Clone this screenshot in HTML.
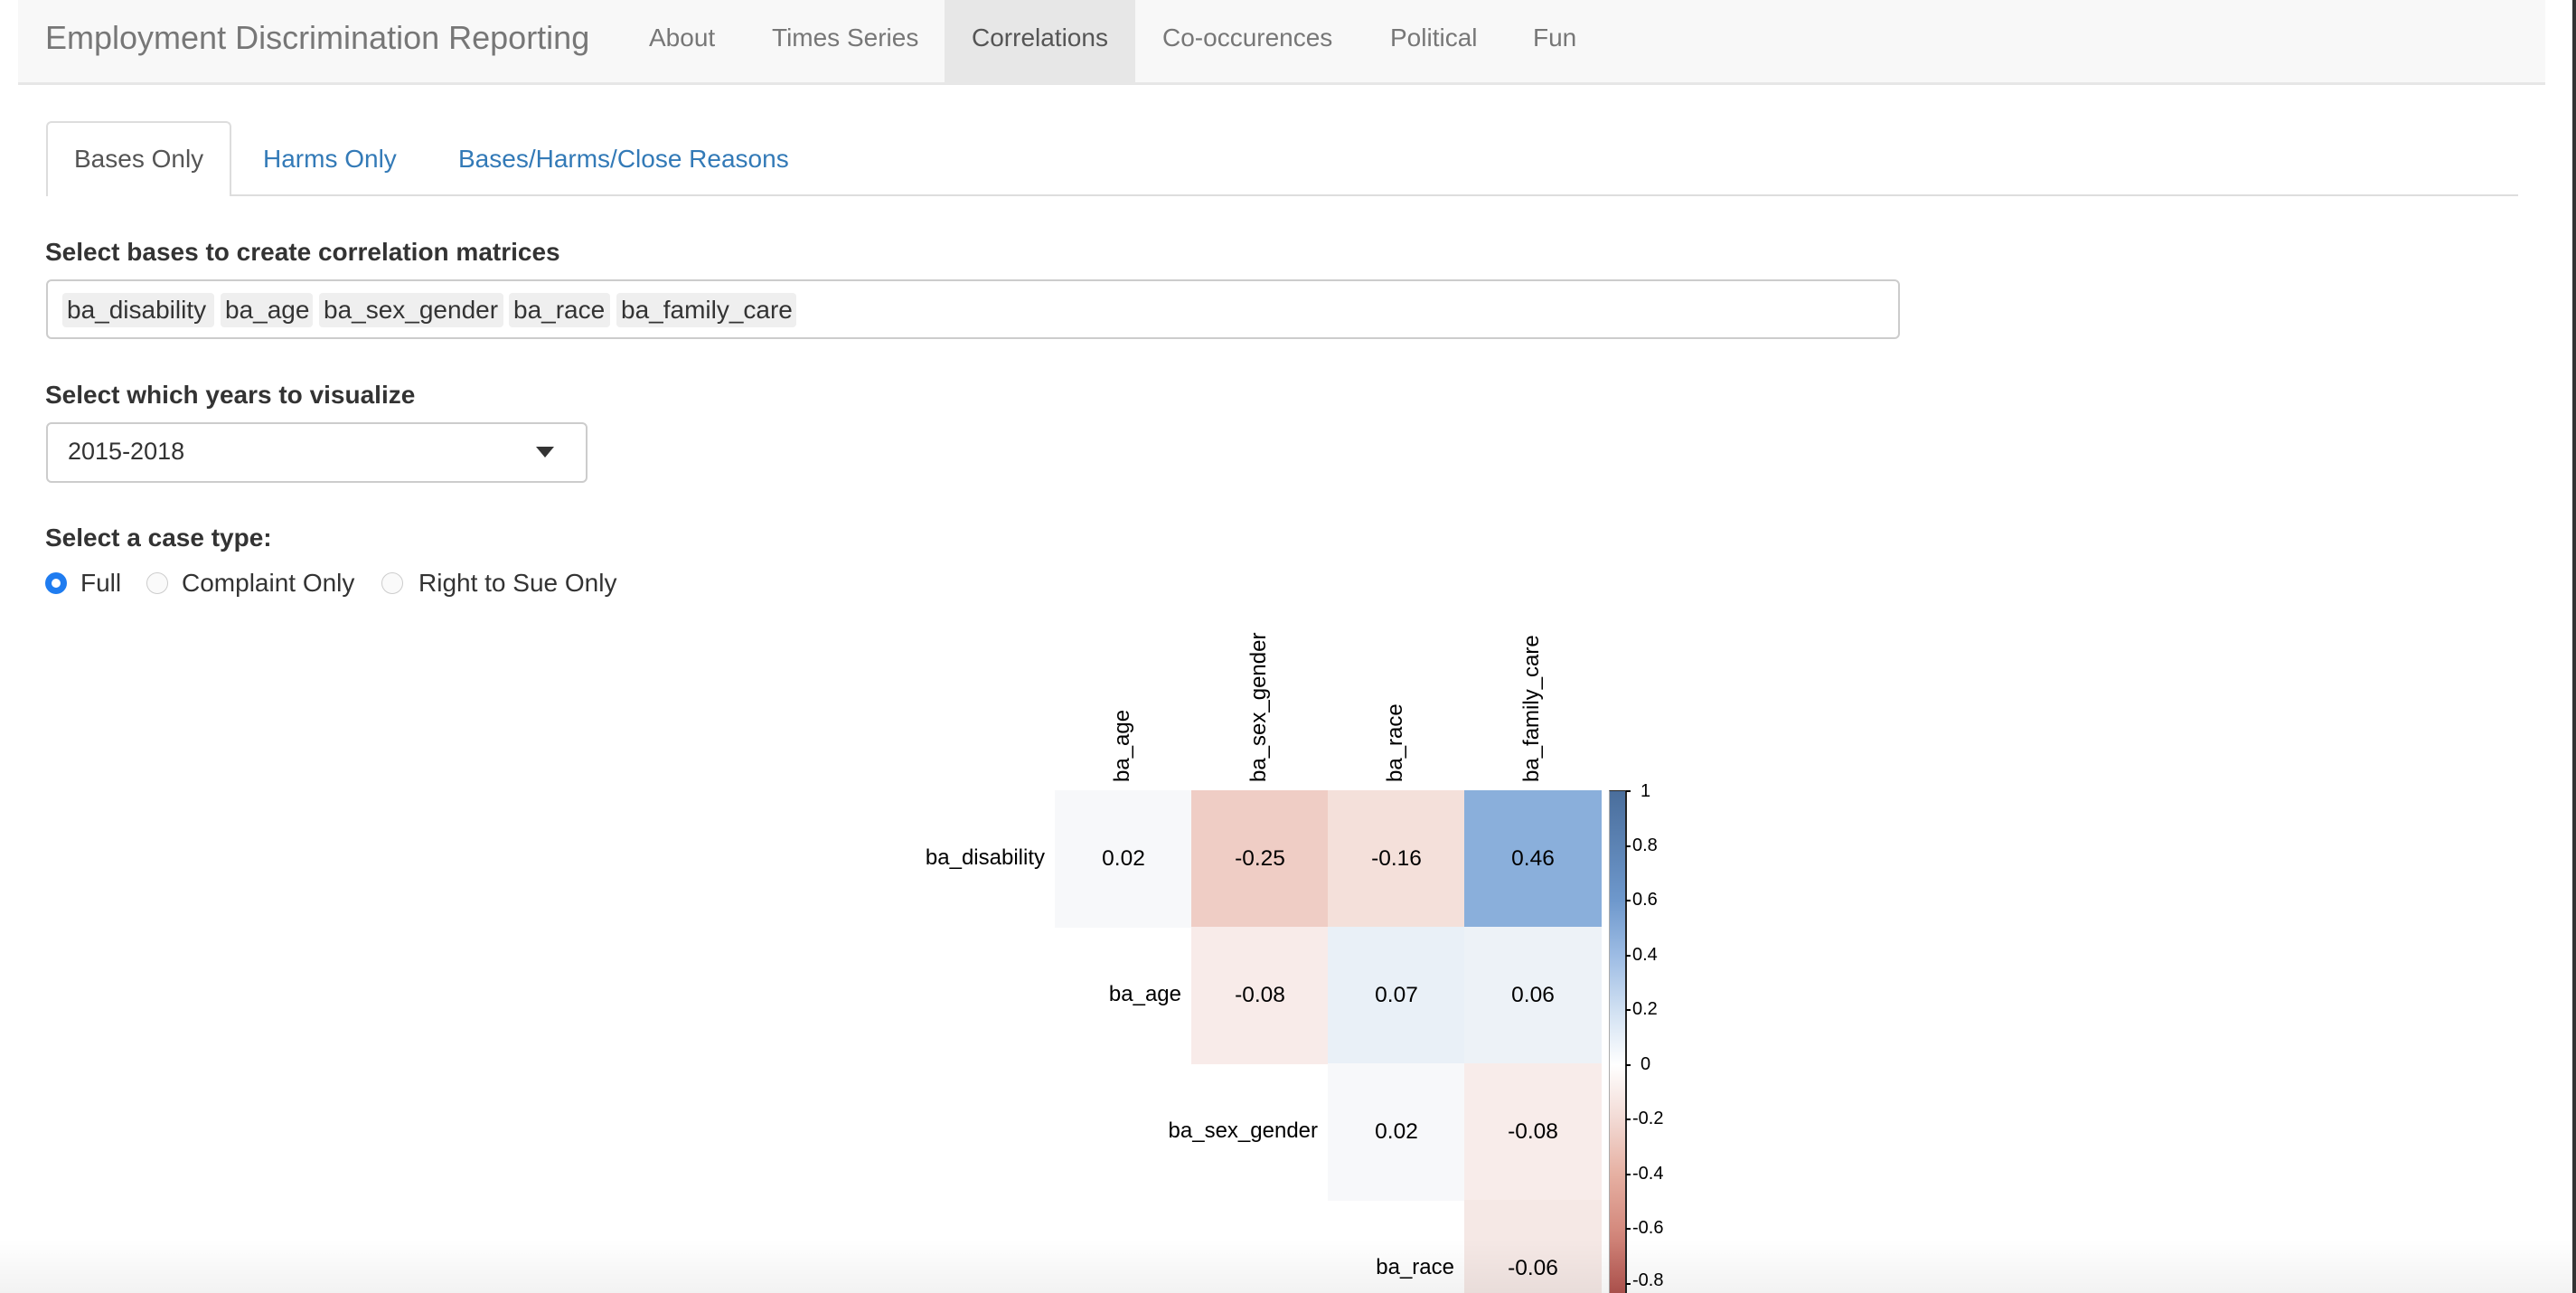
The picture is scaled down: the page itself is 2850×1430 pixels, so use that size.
<!DOCTYPE html>
<html style="width:2850px;height:1430px;overflow:hidden"><head><meta charset="utf-8"><style>
*{margin:0;padding:0;box-sizing:border-box}
body{width:2850px;height:1430px;overflow:hidden;background:#fff;font-family:"Liberation Sans",Arial,sans-serif;color:#333;position:relative}
.a{position:absolute;white-space:nowrap}
.nav{left:20px;top:0;width:2796px;height:94px;background:#f8f8f8;border-bottom:3px solid #e7e7e7}
.ni{top:0;height:91px;line-height:84px;font-size:27px;color:#777}
.lab{font-size:28px;font-weight:bold;color:#333}
.tag{top:324px;height:38px;line-height:38px;background:#efefef;border-radius:4px;font-size:28px;padding-left:5px;color:#333}
.cell{width:152px;height:152px;text-align:center;line-height:152px;font-size:24.5px;color:#000}
.rl{font-size:24px;color:#000;text-align:right;width:300px}
.cl{font-size:24px;color:#000;transform-origin:0 0;transform:rotate(-90deg)}
.tk{font-size:20px;color:#000;left:1806px}
.tm{left:1799px;width:5px;height:2px;background:#000}
</style></head><body>
<div class="a nav"></div>
<div class="a" style="left:1045px;top:0;width:211px;height:91px;background:#e7e7e7"></div>
<div class="a ni" style="left:50px;font-size:36px;color:#777">Employment Discrimination Reporting</div>
<div class="a ni" style="left:718px;font-size:28px">About</div>
<div class="a ni" style="left:854px;font-size:28px">Times Series</div>
<div class="a ni" style="left:1075px;color:#555;font-size:28px">Correlations</div>
<div class="a ni" style="left:1286px;font-size:28px">Co-occurences</div>
<div class="a ni" style="left:1538px;font-size:28px">Political</div>
<div class="a ni" style="left:1696px;font-size:28px">Fun</div>
<div class="a" style="left:2846px;top:0;width:4px;height:1430px;background:#333"></div>

<div class="a" style="left:51px;top:215px;width:2735px;height:2px;background:#ddd"></div>
<div class="a" style="left:51px;top:134px;width:205px;height:83px;background:#fff;border:2px solid #ddd;border-bottom:none;border-radius:6px 6px 0 0"></div>
<div class="a" style="left:82px;top:160px;font-size:28px;color:#555">Bases Only</div>
<div class="a" style="left:291px;top:160px;font-size:28px;color:#337ab7">Harms Only</div>
<div class="a" style="left:507px;top:160px;font-size:28px;color:#337ab7">Bases/Harms/Close Reasons</div>

<div class="a lab" style="left:50px;top:263px">Select bases to create correlation matrices</div>
<div class="a" style="left:51px;top:309px;width:2051px;height:66px;border:2px solid #ccc;border-radius:6px"></div>
<div class="a tag" style="left:69px;width:168px">ba_disability</div>
<div class="a tag" style="left:244px;width:102px">ba_age</div>
<div class="a tag" style="left:353px;width:204px">ba_sex_gender</div>
<div class="a tag" style="left:563px;width:112px">ba_race</div>
<div class="a tag" style="left:682px;width:199px">ba_family_care</div>

<div class="a lab" style="left:50px;top:421px">Select which years to visualize</div>
<div class="a" style="left:51px;top:467px;width:599px;height:67px;border:2px solid #ccc;border-radius:6px"></div>
<div class="a" style="left:75px;top:484px;font-size:27px;color:#333">2015-2018</div>
<div class="a" style="left:593px;top:494px;width:0;height:0;border-left:10px solid transparent;border-right:10px solid transparent;border-top:12px solid #333"></div>

<div class="a lab" style="left:50px;top:579px">Select a case type:</div>
<div class="a" style="left:50px;top:633px;width:24px;height:24px;border-radius:50%;background:#1f7cf0"></div>
<div class="a" style="left:57px;top:640px;width:10px;height:10px;border-radius:50%;background:#fff"></div>
<div class="a" style="left:89px;top:629px;font-size:28px">Full</div>
<div class="a" style="left:162px;top:633px;width:24px;height:24px;border-radius:50%;border:1.5px solid #ccc;background:#fafafa"></div>
<div class="a" style="left:201px;top:629px;font-size:28px">Complaint Only</div>
<div class="a" style="left:422px;top:633px;width:24px;height:24px;border-radius:50%;border:1.5px solid #ccc;background:#fafafa"></div>
<div class="a" style="left:463px;top:629px;font-size:28px">Right to Sue Only</div>

<div class="a cl" style="left:1228px;top:865px">ba_age</div>
<div class="a cl" style="left:1379px;top:865px">ba_sex_gender</div>
<div class="a cl" style="left:1530px;top:865px">ba_race</div>
<div class="a cl" style="left:1681px;top:865px">ba_family_care</div>
<div class="a rl" style="left:856px;top:935px">ba_disability</div>
<div class="a rl" style="left:1007px;top:1086px">ba_age</div>
<div class="a rl" style="left:1158px;top:1237px">ba_sex_gender</div>
<div class="a rl" style="left:1309px;top:1388px">ba_race</div>
<div class="a cell" style="left:1167px;top:874px;background:#f7f8fa">0.02</div>
<div class="a cell" style="left:1318px;top:874px;background:#efcdc5">-0.25</div>
<div class="a cell" style="left:1469px;top:874px;background:#f4e0da">-0.16</div>
<div class="a cell" style="left:1620px;top:874px;background:#8aafdb">0.46</div>
<div class="a cell" style="left:1318px;top:1025px;background:#f8ebe9">-0.08</div>
<div class="a cell" style="left:1469px;top:1025px;background:#e9f0f7">0.07</div>
<div class="a cell" style="left:1620px;top:1025px;background:#edf2f7">0.06</div>
<div class="a cell" style="left:1469px;top:1176px;background:#f7f8fa">0.02</div>
<div class="a cell" style="left:1620px;top:1176px;background:#f8ecea">-0.08</div>
<div class="a cell" style="left:1620px;top:1327px;height:103px;line-height:152px;background:#f5e8e5">-0.06</div>
<div class="a" style="left:1780px;top:874px;width:20px;height:556px;border-left:1px solid #aaa;border-right:2px solid #222;border-top:1px solid #222;background:linear-gradient(#4a6e9c 0px,#6e98cc 121px,#9dbce4 182px,#d0e0f2 242px,#fff 303px,#f2d9d3 364px,#e6b0a2 424px,#d48a7e 485px,#b85c56 545px,#8b2a2e 606px)"></div>
<div class="a tm" style="top:874px"></div><div class="a tk" style="top:864px;left:1815px">1</div>
<div class="a tm" style="top:935px"></div><div class="a tk" style="top:924px">0.8</div>
<div class="a tm" style="top:995px"></div><div class="a tk" style="top:984px">0.6</div>
<div class="a tm" style="top:1056px"></div><div class="a tk" style="top:1045px">0.4</div>
<div class="a tm" style="top:1116px"></div><div class="a tk" style="top:1105px">0.2</div>
<div class="a tm" style="top:1177px"></div><div class="a tk" style="top:1166px;left:1815px">0</div>
<div class="a tm" style="top:1237px"></div><div class="a tk" style="top:1226px">-0.2</div>
<div class="a tm" style="top:1298px"></div><div class="a tk" style="top:1287px">-0.4</div>
<div class="a tm" style="top:1358px"></div><div class="a tk" style="top:1347px">-0.6</div>
<div class="a tm" style="top:1419px"></div><div class="a tk" style="top:1405px">-0.8</div>
<div class="a" style="left:0;top:1370px;width:2846px;height:60px;background:linear-gradient(rgba(0,0,0,0),rgba(0,0,0,0.05))"></div>
</body></html>
